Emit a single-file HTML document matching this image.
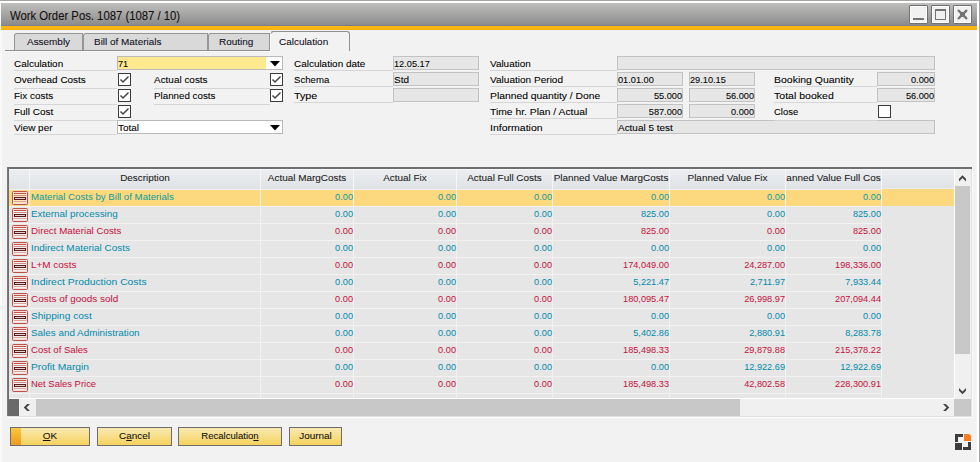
<!DOCTYPE html>
<html><head><meta charset="utf-8"><style>
html,body{margin:0;padding:0}
body{width:980px;height:462px;overflow:hidden;position:relative;background:#f2f2f2;font-family:"Liberation Sans",sans-serif;font-size:9.95px;color:#000}
.a{position:absolute}
.t{position:absolute;white-space:nowrap;line-height:14px;height:14px;-webkit-text-stroke:0.08px currentColor}
</style></head><body>

<div class="a" style="left:0px;top:0px;width:980px;height:1px;background:#a4a4a4"></div>
<div class="a" style="left:0px;top:1px;width:980px;height:2px;background:#ffffff"></div>
<div class="a" style="left:0px;top:3px;width:2px;height:459px;background:#f9f9f9"></div>
<div class="a" style="left:977px;top:1px;width:2px;height:461px;background:#ffffff"></div>
<div class="a" style="left:979px;top:0px;width:1px;height:462px;background:#a4a4a4"></div>
<div class="a" style="left:976px;top:31px;width:1px;height:431px;background:#f8f8f8"></div>
<div class="a" style="left:1px;top:3px;width:976px;height:22px;background:linear-gradient(#bfc0be,#8b8b8b)"></div>
<div class="a" style="left:1px;top:25px;width:976px;height:1px;background:#7b7f89"></div>
<div class="a" style="left:1px;top:26px;width:976px;height:4px;background:linear-gradient(#fdba14,#f8af0c)"></div>
<div class="a" style="left:1px;top:30px;width:976px;height:1px;background:#eef2f7"></div>
<div class="t" style="left:10px;top:9px;font-size:12px;color:#140c0c;transform:scaleX(0.942);transform-origin:0 0">Work Order Pos. 1087 (1087 / 10)</div>
<div class="a" style="left:909px;top:5px;width:19px;height:19px;box-sizing:border-box;border:1px solid #707070;border-radius:1px;background:#f1f1f1;box-shadow:inset 0 0 0 1px #ffffff"></div>
<div class="a" style="left:931px;top:5px;width:19px;height:19px;box-sizing:border-box;border:1px solid #707070;border-radius:1px;background:#f1f1f1;box-shadow:inset 0 0 0 1px #ffffff"></div>
<div class="a" style="left:953px;top:5px;width:19px;height:19px;box-sizing:border-box;border:1px solid #707070;border-radius:1px;background:#f1f1f1;box-shadow:inset 0 0 0 1px #ffffff"></div>
<div class="a" style="left:913px;top:18px;width:11px;height:2px;background:#737373"></div>
<div class="a" style="left:935px;top:9px;width:11px;height:11px;box-sizing:border-box;border:1px solid #737373;border-top-width:2px"></div>
<svg class="a" style="left:953px;top:5px" width="19" height="19" viewBox="0 0 19 19"><path d="M5.6 5.6L13.4 13.4M13.4 5.6L5.6 13.4" stroke="#747474" stroke-width="2.2" stroke-linecap="round"/><rect x="7" y="7" width="5" height="5" fill="#747474"/></svg>
<div class="a" style="left:5px;top:50px;width:266px;height:1px;background:#8e8e8e"></div>
<div class="a" style="left:5px;top:51px;width:266px;height:1px;background:#fafafa"></div>
<div class="a" style="left:14px;top:33px;width:69px;height:17px;box-sizing:border-box;border:1px solid #959595;border-bottom:none;border-top-left-radius:3px;background:#d9d9d9"></div>
<div class="t" style="left:27px;top:35px;color:#0f0f24">Assembly</div>
<div class="a" style="left:83px;top:33px;width:125px;height:17px;box-sizing:border-box;border:1px solid #959595;border-bottom:none;border-top-left-radius:3px;background:#d9d9d9"></div>
<div class="t" style="left:94px;top:35px;color:#0f0f24">Bill of Materials</div>
<div class="a" style="left:208px;top:33px;width:62px;height:17px;box-sizing:border-box;border:1px solid #959595;border-bottom:none;border-top-left-radius:3px;background:#d9d9d9"></div>
<div class="t" style="left:219px;top:35px;color:#0f0f24">Routing</div>
<div class="a" style="left:270px;top:31px;width:80px;height:20px;box-sizing:border-box;border:1px solid #8f8f8f;border-left-color:#fafafa;border-bottom:none;border-top-left-radius:3px;border-top-right-radius:3px;background:#f2f2f2"></div>
<svg class="a" style="left:269px;top:30px" width="5" height="5" viewBox="269 30 5 5"><path d="M270.5 33.8L273 31.5" stroke="#8f8f8f" stroke-width="1"/></svg>
<div class="t" style="left:279px;top:35px;color:#0f0f24">Calculation</div>
<div class="t" style="left:14px;top:57px;color:#000">Calculation</div>
<div class="a" style="left:14px;top:70px;width:103px;height:1px;background:#d6d6d6"></div>
<div class="a" style="left:117px;top:56px;width:166px;height:14px;box-sizing:border-box;border:1px solid #b9b9b9;background:#fff"></div>
<div class="a" style="left:118px;top:57px;width:148px;height:12px;background:#fee98f"></div>
<div class="t" style="left:118px;top:57px;font-size:9.2px;">71</div>
<svg class="a" style="left:270px;top:61px" width="10" height="6" viewBox="0 0 10 6"><path d="M0 0H10L5 5.5Z" fill="#000"/></svg>
<div class="t" style="left:14px;top:73px;color:#000">Overhead Costs</div>
<div class="a" style="left:14px;top:88px;width:103px;height:1px;background:#d6d6d6"></div>
<div class="a" style="left:118px;top:73px;width:13px;height:13px;box-sizing:border-box;border:1px solid #3a3a3a;background:#fff"></div>
<svg class="a" style="left:118px;top:73px" width="13" height="13" viewBox="0 0 13 13"><path d="M2.5 6.5L5 9L10.5 3.5" stroke="#454545" stroke-width="1.5" fill="none"/></svg>
<div class="t" style="left:14px;top:89px;color:#000">Fix costs</div>
<div class="a" style="left:14px;top:104px;width:103px;height:1px;background:#d6d6d6"></div>
<div class="a" style="left:118px;top:89px;width:13px;height:13px;box-sizing:border-box;border:1px solid #3a3a3a;background:#fff"></div>
<svg class="a" style="left:118px;top:89px" width="13" height="13" viewBox="0 0 13 13"><path d="M2.5 6.5L5 9L10.5 3.5" stroke="#454545" stroke-width="1.5" fill="none"/></svg>
<div class="t" style="left:14px;top:105px;color:#000">Full Cost</div>
<div class="a" style="left:14px;top:120px;width:103px;height:1px;background:#d6d6d6"></div>
<div class="a" style="left:118px;top:105px;width:13px;height:13px;box-sizing:border-box;border:1px solid #3a3a3a;background:#fff"></div>
<svg class="a" style="left:118px;top:105px" width="13" height="13" viewBox="0 0 13 13"><path d="M2.5 6.5L5 9L10.5 3.5" stroke="#454545" stroke-width="1.5" fill="none"/></svg>
<div class="t" style="left:14px;top:121px;color:#000">View per</div>
<div class="a" style="left:14px;top:134px;width:103px;height:1px;background:#d6d6d6"></div>
<div class="a" style="left:117px;top:120px;width:166px;height:14px;box-sizing:border-box;border:1px solid #b9b9b9;background:#fff"></div>
<div class="t" style="left:118px;top:121px;">Total</div>
<svg class="a" style="left:270px;top:125px" width="10" height="6" viewBox="0 0 10 6"><path d="M0 0H10L5 5.5Z" fill="#000"/></svg>
<div class="t" style="left:154px;top:73px;color:#000">Actual costs</div>
<div class="a" style="left:154px;top:88px;width:116px;height:1px;background:#d6d6d6"></div>
<div class="a" style="left:270px;top:73px;width:13px;height:13px;box-sizing:border-box;border:1px solid #3a3a3a;background:#fff"></div>
<svg class="a" style="left:270px;top:73px" width="13" height="13" viewBox="0 0 13 13"><path d="M2.5 6.5L5 9L10.5 3.5" stroke="#454545" stroke-width="1.5" fill="none"/></svg>
<div class="t" style="left:154px;top:89px;color:#000;transform:scaleX(0.984);transform-origin:0 0">Planned costs</div>
<div class="a" style="left:154px;top:104px;width:116px;height:1px;background:#d6d6d6"></div>
<div class="a" style="left:270px;top:89px;width:13px;height:13px;box-sizing:border-box;border:1px solid #3a3a3a;background:#fff"></div>
<svg class="a" style="left:270px;top:89px" width="13" height="13" viewBox="0 0 13 13"><path d="M2.5 6.5L5 9L10.5 3.5" stroke="#454545" stroke-width="1.5" fill="none"/></svg>
<div class="t" style="left:294px;top:57px;color:#000">Calculation date</div>
<div class="a" style="left:294px;top:70px;width:99px;height:1px;background:#d6d6d6"></div>
<div class="a" style="left:393px;top:56px;width:86px;height:14px;box-sizing:border-box;border:1px solid #c2c2c2;background:#e6e6e6"></div>
<div class="t" style="left:394px;top:57px;font-size:9.2px;">12.05.17</div>
<div class="t" style="left:294px;top:73px;color:#000;transform:scaleX(0.966);transform-origin:0 0">Schema</div>
<div class="a" style="left:294px;top:86px;width:99px;height:1px;background:#d6d6d6"></div>
<div class="a" style="left:393px;top:72px;width:86px;height:14px;box-sizing:border-box;border:1px solid #c2c2c2;background:#e6e6e6"></div>
<div class="t" style="left:394px;top:73px;">Std</div>
<div class="t" style="left:294px;top:89px;color:#000;transform:scaleX(1.078);transform-origin:0 0">Type</div>
<div class="a" style="left:294px;top:102px;width:99px;height:1px;background:#d6d6d6"></div>
<div class="a" style="left:393px;top:88px;width:86px;height:14px;box-sizing:border-box;border:1px solid #c2c2c2;background:#e6e6e6"></div>
<div class="t" style="left:490px;top:57px;color:#000">Valuation</div>
<div class="a" style="left:490px;top:70px;width:127px;height:1px;background:#d6d6d6"></div>
<div class="a" style="left:617px;top:56px;width:318px;height:14px;box-sizing:border-box;border:1px solid #c2c2c2;background:#e6e6e6"></div>
<div class="t" style="left:490px;top:73px;color:#000;transform:scaleX(1.012);transform-origin:0 0">Valuation Period</div>
<div class="a" style="left:490px;top:86px;width:127px;height:1px;background:#d6d6d6"></div>
<div class="a" style="left:617px;top:72px;width:66px;height:14px;box-sizing:border-box;border:1px solid #c2c2c2;background:#e6e6e6"></div>
<div class="a" style="left:689px;top:72px;width:66px;height:14px;box-sizing:border-box;border:1px solid #c2c2c2;background:#e6e6e6"></div>
<div class="t" style="left:618px;top:73px;font-size:9.2px;">01.01.00</div>
<div class="t" style="left:690px;top:73px;font-size:9.2px;">29.10.15</div>
<div class="t" style="left:490px;top:89px;color:#000;transform:scaleX(1.04);transform-origin:0 0">Planned quantity / Done</div>
<div class="a" style="left:490px;top:102px;width:127px;height:1px;background:#d6d6d6"></div>
<div class="a" style="left:617px;top:88px;width:66px;height:14px;box-sizing:border-box;border:1px solid #c2c2c2;background:#e6e6e6"></div>
<div class="a" style="left:689px;top:88px;width:66px;height:14px;box-sizing:border-box;border:1px solid #c2c2c2;background:#e6e6e6"></div>
<div class="t" style="left:617px;top:89px;width:65px;text-align:right;font-size:9.2px;">55.000</div>
<div class="t" style="left:689px;top:89px;width:65px;text-align:right;font-size:9.2px;">56.000</div>
<div class="t" style="left:490px;top:105px;color:#000;transform:scaleX(1.04);transform-origin:0 0">Time hr. Plan / Actual</div>
<div class="a" style="left:490px;top:118px;width:127px;height:1px;background:#d6d6d6"></div>
<div class="a" style="left:617px;top:104px;width:66px;height:14px;box-sizing:border-box;border:1px solid #c2c2c2;background:#e6e6e6"></div>
<div class="a" style="left:689px;top:104px;width:66px;height:14px;box-sizing:border-box;border:1px solid #c2c2c2;background:#e6e6e6"></div>
<div class="t" style="left:617px;top:105px;width:65px;text-align:right;font-size:9.2px;">587.000</div>
<div class="t" style="left:689px;top:105px;width:65px;text-align:right;font-size:9.2px;">0.000</div>
<div class="t" style="left:490px;top:121px;color:#000;transform:scaleX(1.058);transform-origin:0 0">Information</div>
<div class="a" style="left:490px;top:134px;width:127px;height:1px;background:#d6d6d6"></div>
<div class="a" style="left:617px;top:120px;width:318px;height:14px;box-sizing:border-box;border:1px solid #c2c2c2;background:#e6e6e6"></div>
<div class="t" style="left:618px;top:121px;">Actual 5 test</div>
<div class="a" style="left:775px;top:120px;width:102px;height:1px;background:#d4d4d4"></div>
<div class="t" style="left:774px;top:73px;color:#000;transform:scaleX(1.055);transform-origin:0 0">Booking Quantity</div>
<div class="a" style="left:774px;top:86px;width:103px;height:1px;background:#d6d6d6"></div>
<div class="a" style="left:877px;top:72px;width:58px;height:14px;box-sizing:border-box;border:1px solid #c2c2c2;background:#e6e6e6"></div>
<div class="t" style="left:877px;top:73px;width:57px;text-align:right;font-size:9.2px;">0.000</div>
<div class="t" style="left:774px;top:89px;color:#000;transform:scaleX(1.061);transform-origin:0 0">Total booked</div>
<div class="a" style="left:774px;top:102px;width:103px;height:1px;background:#d6d6d6"></div>
<div class="a" style="left:877px;top:88px;width:58px;height:14px;box-sizing:border-box;border:1px solid #c2c2c2;background:#e6e6e6"></div>
<div class="t" style="left:877px;top:89px;width:57px;text-align:right;font-size:9.2px;">56.000</div>
<div class="t" style="left:774px;top:105px;color:#000;transform:scaleX(0.951);transform-origin:0 0">Close</div>
<div class="a" style="left:878px;top:105px;width:13px;height:13px;box-sizing:border-box;border:1px solid #3a3a3a;background:#fff"></div>
<div class="a" style="left:7px;top:167px;width:965px;height:2px;background:#6f6f6f"></div>
<div class="a" style="left:7px;top:167px;width:2px;height:250px;background:#6f6f6f"></div>
<div class="a" style="left:7px;top:167px;width:1px;height:250px;background:#7a7a7a"></div>
<div class="a" style="left:971px;top:169px;width:1px;height:248px;background:#e2e2e2"></div>
<div class="a" style="left:972px;top:167px;width:1px;height:251px;background:#fbfbfb"></div>
<div class="a" style="left:7px;top:416px;width:965px;height:1px;background:#e2e2e2"></div>
<div class="a" style="left:7px;top:417px;width:966px;height:1px;background:#fbfbfb"></div>
<div class="a" style="left:9px;top:169px;width:945px;height:21px;background:linear-gradient(#eceef1,#dfe2e5)"></div>
<div class="a" style="left:9px;top:169px;width:945px;height:1px;background:#f7f8f9"></div>
<div class="a" style="left:9px;top:189px;width:873px;height:1px;background:#eef0f4"></div>
<div class="a" style="left:882px;top:188px;width:72px;height:1px;background:#e9ecf3"></div>
<div class="a" style="left:882px;top:189px;width:72px;height:1px;background:#fcd97f"></div>
<div class="a" style="left:29px;top:170px;width:1px;height:20px;background:#f6f7f8"></div>
<div class="a" style="left:260px;top:170px;width:1px;height:20px;background:#f6f7f8"></div>
<div class="a" style="left:353px;top:170px;width:1px;height:20px;background:#f6f7f8"></div>
<div class="a" style="left:456px;top:170px;width:1px;height:20px;background:#f6f7f8"></div>
<div class="a" style="left:552px;top:170px;width:1px;height:20px;background:#f6f7f8"></div>
<div class="a" style="left:669px;top:170px;width:1px;height:20px;background:#f6f7f8"></div>
<div class="a" style="left:785px;top:170px;width:1px;height:20px;background:#f6f7f8"></div>
<div class="a" style="left:881px;top:170px;width:1px;height:20px;background:#f6f7f8"></div>
<div class="t" style="left:30px;top:171px;width:230px;text-align:center;color:#1a1a1a;text-align:center;overflow:hidden">Description</div>
<div class="t" style="left:261px;top:171px;width:92px;text-align:center;color:#1a1a1a;text-align:center;overflow:hidden">Actual MargCosts</div>
<div class="t" style="left:354px;top:171px;width:102px;text-align:center;color:#1a1a1a;text-align:center;overflow:hidden">Actual Fix</div>
<div class="t" style="left:457px;top:171px;width:95px;text-align:center;color:#1a1a1a;text-align:center;overflow:hidden">Actual Full Costs</div>
<div class="t" style="left:553px;top:171px;width:116px;text-align:center;color:#1a1a1a;text-align:center;overflow:hidden">Planned Value MargCosts</div>
<div class="t" style="left:670px;top:171px;width:115px;text-align:center;color:#1a1a1a;text-align:center;overflow:hidden">Planned Value Fix</div>
<div class="t" style="left:786px;top:171px;width:95px;text-align:center;color:#1a1a1a;text-align:center;overflow:hidden">anned Value Full Cos</div>
<div class="a" style="left:9px;top:190px;width:945px;height:208px;background:#e6e6e6"></div>
<div class="a" style="left:9px;top:190px;width:945px;height:16px;background:#fcd97f"></div>
<div class="a" style="left:9px;top:206px;width:872px;height:1px;background:#f2f2f2"></div>
<div class="a" style="left:29px;top:190px;width:1px;height:17px;background:#f2f2f2"></div>
<div class="a" style="left:260px;top:190px;width:1px;height:17px;background:#f2f2f2"></div>
<div class="a" style="left:353px;top:190px;width:1px;height:17px;background:#f2f2f2"></div>
<div class="a" style="left:456px;top:190px;width:1px;height:17px;background:#f2f2f2"></div>
<div class="a" style="left:552px;top:190px;width:1px;height:17px;background:#f2f2f2"></div>
<div class="a" style="left:669px;top:190px;width:1px;height:17px;background:#f2f2f2"></div>
<div class="a" style="left:785px;top:190px;width:1px;height:17px;background:#f2f2f2"></div>
<div class="a" style="left:881px;top:190px;width:1px;height:17px;background:#f2f2f2"></div>
<svg class="a" style="left:12px;top:191px" width="16" height="14" viewBox="0 0 16 14"><rect x="0.5" y="0.5" width="15" height="13" rx="1" fill="rgba(255,255,255,0.45)" stroke="#bf5149"/><rect x="1.5" y="1.5" width="13" height="11" fill="none" stroke="#f4dcd8"/><rect x="2" y="2" width="12" height="1" fill="#c0544b"/><rect x="2" y="4" width="12" height="1" fill="#d48a82"/><rect x="2.5" y="6.5" width="11" height="2" fill="#e8d0d0" stroke="#5a1c1c"/><rect x="2" y="10" width="12" height="1" fill="#dca29a"/></svg>
<div class="t" style="left:31px;top:190px;color:#0e9a9e;-webkit-text-stroke:0;transform:scaleX(0.972);transform-origin:0 0">Material Costs by Bill of Materials</div>
<div class="t" style="left:261px;top:190px;width:92px;text-align:right;color:#0e9a9e;-webkit-text-stroke:0;font-size:9.2px;">0.00</div>
<div class="t" style="left:354px;top:190px;width:102px;text-align:right;color:#0e9a9e;-webkit-text-stroke:0;font-size:9.2px;">0.00</div>
<div class="t" style="left:457px;top:190px;width:95px;text-align:right;color:#0e9a9e;-webkit-text-stroke:0;font-size:9.2px;">0.00</div>
<div class="t" style="left:553px;top:190px;width:116px;text-align:right;color:#0e9a9e;-webkit-text-stroke:0;font-size:9.2px;">0.00</div>
<div class="t" style="left:670px;top:190px;width:115px;text-align:right;color:#0e9a9e;-webkit-text-stroke:0;font-size:9.2px;">0.00</div>
<div class="t" style="left:786px;top:190px;width:95px;text-align:right;color:#0e9a9e;-webkit-text-stroke:0;font-size:9.2px;">0.00</div>
<div class="a" style="left:9px;top:207px;width:945px;height:16px;background:#e6e6e6"></div>
<div class="a" style="left:9px;top:223px;width:872px;height:1px;background:#f2f2f2"></div>
<div class="a" style="left:29px;top:207px;width:1px;height:17px;background:#f2f2f2"></div>
<div class="a" style="left:260px;top:207px;width:1px;height:17px;background:#f2f2f2"></div>
<div class="a" style="left:353px;top:207px;width:1px;height:17px;background:#f2f2f2"></div>
<div class="a" style="left:456px;top:207px;width:1px;height:17px;background:#f2f2f2"></div>
<div class="a" style="left:552px;top:207px;width:1px;height:17px;background:#f2f2f2"></div>
<div class="a" style="left:669px;top:207px;width:1px;height:17px;background:#f2f2f2"></div>
<div class="a" style="left:785px;top:207px;width:1px;height:17px;background:#f2f2f2"></div>
<div class="a" style="left:881px;top:207px;width:1px;height:17px;background:#f2f2f2"></div>
<svg class="a" style="left:12px;top:208px" width="16" height="14" viewBox="0 0 16 14"><rect x="0.5" y="0.5" width="15" height="13" rx="1" fill="rgba(255,255,255,0.45)" stroke="#bf5149"/><rect x="1.5" y="1.5" width="13" height="11" fill="none" stroke="#f4dcd8"/><rect x="2" y="2" width="12" height="1" fill="#c0544b"/><rect x="2" y="4" width="12" height="1" fill="#d48a82"/><rect x="2.5" y="6.5" width="11" height="2" fill="#e8d0d0" stroke="#5a1c1c"/><rect x="2" y="10" width="12" height="1" fill="#dca29a"/></svg>
<div class="t" style="left:31px;top:207px;color:#008aab;-webkit-text-stroke:0;transform:scaleX(0.994);transform-origin:0 0">External processing</div>
<div class="t" style="left:261px;top:207px;width:92px;text-align:right;color:#008aab;-webkit-text-stroke:0;font-size:9.2px;">0.00</div>
<div class="t" style="left:354px;top:207px;width:102px;text-align:right;color:#008aab;-webkit-text-stroke:0;font-size:9.2px;">0.00</div>
<div class="t" style="left:457px;top:207px;width:95px;text-align:right;color:#008aab;-webkit-text-stroke:0;font-size:9.2px;">0.00</div>
<div class="t" style="left:553px;top:207px;width:116px;text-align:right;color:#008aab;-webkit-text-stroke:0;font-size:9.2px;">825.00</div>
<div class="t" style="left:670px;top:207px;width:115px;text-align:right;color:#008aab;-webkit-text-stroke:0;font-size:9.2px;">0.00</div>
<div class="t" style="left:786px;top:207px;width:95px;text-align:right;color:#008aab;-webkit-text-stroke:0;font-size:9.2px;">825.00</div>
<div class="a" style="left:9px;top:224px;width:945px;height:16px;background:#e6e6e6"></div>
<div class="a" style="left:9px;top:240px;width:872px;height:1px;background:#f2f2f2"></div>
<div class="a" style="left:29px;top:224px;width:1px;height:17px;background:#f2f2f2"></div>
<div class="a" style="left:260px;top:224px;width:1px;height:17px;background:#f2f2f2"></div>
<div class="a" style="left:353px;top:224px;width:1px;height:17px;background:#f2f2f2"></div>
<div class="a" style="left:456px;top:224px;width:1px;height:17px;background:#f2f2f2"></div>
<div class="a" style="left:552px;top:224px;width:1px;height:17px;background:#f2f2f2"></div>
<div class="a" style="left:669px;top:224px;width:1px;height:17px;background:#f2f2f2"></div>
<div class="a" style="left:785px;top:224px;width:1px;height:17px;background:#f2f2f2"></div>
<div class="a" style="left:881px;top:224px;width:1px;height:17px;background:#f2f2f2"></div>
<svg class="a" style="left:12px;top:225px" width="16" height="14" viewBox="0 0 16 14"><rect x="0.5" y="0.5" width="15" height="13" rx="1" fill="rgba(255,255,255,0.45)" stroke="#bf5149"/><rect x="1.5" y="1.5" width="13" height="11" fill="none" stroke="#f4dcd8"/><rect x="2" y="2" width="12" height="1" fill="#c0544b"/><rect x="2" y="4" width="12" height="1" fill="#d48a82"/><rect x="2.5" y="6.5" width="11" height="2" fill="#e8d0d0" stroke="#5a1c1c"/><rect x="2" y="10" width="12" height="1" fill="#dca29a"/></svg>
<div class="t" style="left:31px;top:224px;color:#c80e3c;-webkit-text-stroke:0;transform:scaleX(0.98);transform-origin:0 0">Direct Material Costs</div>
<div class="t" style="left:261px;top:224px;width:92px;text-align:right;color:#c80e3c;-webkit-text-stroke:0;font-size:9.2px;">0.00</div>
<div class="t" style="left:354px;top:224px;width:102px;text-align:right;color:#c80e3c;-webkit-text-stroke:0;font-size:9.2px;">0.00</div>
<div class="t" style="left:457px;top:224px;width:95px;text-align:right;color:#c80e3c;-webkit-text-stroke:0;font-size:9.2px;">0.00</div>
<div class="t" style="left:553px;top:224px;width:116px;text-align:right;color:#c80e3c;-webkit-text-stroke:0;font-size:9.2px;">825.00</div>
<div class="t" style="left:670px;top:224px;width:115px;text-align:right;color:#c80e3c;-webkit-text-stroke:0;font-size:9.2px;">0.00</div>
<div class="t" style="left:786px;top:224px;width:95px;text-align:right;color:#c80e3c;-webkit-text-stroke:0;font-size:9.2px;">825.00</div>
<div class="a" style="left:9px;top:241px;width:945px;height:16px;background:#e6e6e6"></div>
<div class="a" style="left:9px;top:257px;width:872px;height:1px;background:#f2f2f2"></div>
<div class="a" style="left:29px;top:241px;width:1px;height:17px;background:#f2f2f2"></div>
<div class="a" style="left:260px;top:241px;width:1px;height:17px;background:#f2f2f2"></div>
<div class="a" style="left:353px;top:241px;width:1px;height:17px;background:#f2f2f2"></div>
<div class="a" style="left:456px;top:241px;width:1px;height:17px;background:#f2f2f2"></div>
<div class="a" style="left:552px;top:241px;width:1px;height:17px;background:#f2f2f2"></div>
<div class="a" style="left:669px;top:241px;width:1px;height:17px;background:#f2f2f2"></div>
<div class="a" style="left:785px;top:241px;width:1px;height:17px;background:#f2f2f2"></div>
<div class="a" style="left:881px;top:241px;width:1px;height:17px;background:#f2f2f2"></div>
<svg class="a" style="left:12px;top:242px" width="16" height="14" viewBox="0 0 16 14"><rect x="0.5" y="0.5" width="15" height="13" rx="1" fill="rgba(255,255,255,0.45)" stroke="#bf5149"/><rect x="1.5" y="1.5" width="13" height="11" fill="none" stroke="#f4dcd8"/><rect x="2" y="2" width="12" height="1" fill="#c0544b"/><rect x="2" y="4" width="12" height="1" fill="#d48a82"/><rect x="2.5" y="6.5" width="11" height="2" fill="#e8d0d0" stroke="#5a1c1c"/><rect x="2" y="10" width="12" height="1" fill="#dca29a"/></svg>
<div class="t" style="left:31px;top:241px;color:#008aab;-webkit-text-stroke:0;transform:scaleX(1.0);transform-origin:0 0">Indirect Material Costs</div>
<div class="t" style="left:261px;top:241px;width:92px;text-align:right;color:#008aab;-webkit-text-stroke:0;font-size:9.2px;">0.00</div>
<div class="t" style="left:354px;top:241px;width:102px;text-align:right;color:#008aab;-webkit-text-stroke:0;font-size:9.2px;">0.00</div>
<div class="t" style="left:457px;top:241px;width:95px;text-align:right;color:#008aab;-webkit-text-stroke:0;font-size:9.2px;">0.00</div>
<div class="t" style="left:553px;top:241px;width:116px;text-align:right;color:#008aab;-webkit-text-stroke:0;font-size:9.2px;">0.00</div>
<div class="t" style="left:670px;top:241px;width:115px;text-align:right;color:#008aab;-webkit-text-stroke:0;font-size:9.2px;">0.00</div>
<div class="t" style="left:786px;top:241px;width:95px;text-align:right;color:#008aab;-webkit-text-stroke:0;font-size:9.2px;">0.00</div>
<div class="a" style="left:9px;top:258px;width:945px;height:16px;background:#e6e6e6"></div>
<div class="a" style="left:9px;top:274px;width:872px;height:1px;background:#f2f2f2"></div>
<div class="a" style="left:29px;top:258px;width:1px;height:17px;background:#f2f2f2"></div>
<div class="a" style="left:260px;top:258px;width:1px;height:17px;background:#f2f2f2"></div>
<div class="a" style="left:353px;top:258px;width:1px;height:17px;background:#f2f2f2"></div>
<div class="a" style="left:456px;top:258px;width:1px;height:17px;background:#f2f2f2"></div>
<div class="a" style="left:552px;top:258px;width:1px;height:17px;background:#f2f2f2"></div>
<div class="a" style="left:669px;top:258px;width:1px;height:17px;background:#f2f2f2"></div>
<div class="a" style="left:785px;top:258px;width:1px;height:17px;background:#f2f2f2"></div>
<div class="a" style="left:881px;top:258px;width:1px;height:17px;background:#f2f2f2"></div>
<svg class="a" style="left:12px;top:259px" width="16" height="14" viewBox="0 0 16 14"><rect x="0.5" y="0.5" width="15" height="13" rx="1" fill="rgba(255,255,255,0.45)" stroke="#bf5149"/><rect x="1.5" y="1.5" width="13" height="11" fill="none" stroke="#f4dcd8"/><rect x="2" y="2" width="12" height="1" fill="#c0544b"/><rect x="2" y="4" width="12" height="1" fill="#d48a82"/><rect x="2.5" y="6.5" width="11" height="2" fill="#e8d0d0" stroke="#5a1c1c"/><rect x="2" y="10" width="12" height="1" fill="#dca29a"/></svg>
<div class="t" style="left:31px;top:258px;color:#c80e3c;-webkit-text-stroke:0;transform:scaleX(1.0);transform-origin:0 0">L+M costs</div>
<div class="t" style="left:261px;top:258px;width:92px;text-align:right;color:#c80e3c;-webkit-text-stroke:0;font-size:9.2px;">0.00</div>
<div class="t" style="left:354px;top:258px;width:102px;text-align:right;color:#c80e3c;-webkit-text-stroke:0;font-size:9.2px;">0.00</div>
<div class="t" style="left:457px;top:258px;width:95px;text-align:right;color:#c80e3c;-webkit-text-stroke:0;font-size:9.2px;">0.00</div>
<div class="t" style="left:553px;top:258px;width:116px;text-align:right;color:#c80e3c;-webkit-text-stroke:0;font-size:9.2px;">174,049.00</div>
<div class="t" style="left:670px;top:258px;width:115px;text-align:right;color:#c80e3c;-webkit-text-stroke:0;font-size:9.2px;">24,287.00</div>
<div class="t" style="left:786px;top:258px;width:95px;text-align:right;color:#c80e3c;-webkit-text-stroke:0;font-size:9.2px;">198,336.00</div>
<div class="a" style="left:9px;top:275px;width:945px;height:16px;background:#e6e6e6"></div>
<div class="a" style="left:9px;top:291px;width:872px;height:1px;background:#f2f2f2"></div>
<div class="a" style="left:29px;top:275px;width:1px;height:17px;background:#f2f2f2"></div>
<div class="a" style="left:260px;top:275px;width:1px;height:17px;background:#f2f2f2"></div>
<div class="a" style="left:353px;top:275px;width:1px;height:17px;background:#f2f2f2"></div>
<div class="a" style="left:456px;top:275px;width:1px;height:17px;background:#f2f2f2"></div>
<div class="a" style="left:552px;top:275px;width:1px;height:17px;background:#f2f2f2"></div>
<div class="a" style="left:669px;top:275px;width:1px;height:17px;background:#f2f2f2"></div>
<div class="a" style="left:785px;top:275px;width:1px;height:17px;background:#f2f2f2"></div>
<div class="a" style="left:881px;top:275px;width:1px;height:17px;background:#f2f2f2"></div>
<svg class="a" style="left:12px;top:276px" width="16" height="14" viewBox="0 0 16 14"><rect x="0.5" y="0.5" width="15" height="13" rx="1" fill="rgba(255,255,255,0.45)" stroke="#bf5149"/><rect x="1.5" y="1.5" width="13" height="11" fill="none" stroke="#f4dcd8"/><rect x="2" y="2" width="12" height="1" fill="#c0544b"/><rect x="2" y="4" width="12" height="1" fill="#d48a82"/><rect x="2.5" y="6.5" width="11" height="2" fill="#e8d0d0" stroke="#5a1c1c"/><rect x="2" y="10" width="12" height="1" fill="#dca29a"/></svg>
<div class="t" style="left:31px;top:275px;color:#008aab;-webkit-text-stroke:0;transform:scaleX(1.041);transform-origin:0 0">Indirect Production Costs</div>
<div class="t" style="left:261px;top:275px;width:92px;text-align:right;color:#008aab;-webkit-text-stroke:0;font-size:9.2px;">0.00</div>
<div class="t" style="left:354px;top:275px;width:102px;text-align:right;color:#008aab;-webkit-text-stroke:0;font-size:9.2px;">0.00</div>
<div class="t" style="left:457px;top:275px;width:95px;text-align:right;color:#008aab;-webkit-text-stroke:0;font-size:9.2px;">0.00</div>
<div class="t" style="left:553px;top:275px;width:116px;text-align:right;color:#008aab;-webkit-text-stroke:0;font-size:9.2px;">5,221.47</div>
<div class="t" style="left:670px;top:275px;width:115px;text-align:right;color:#008aab;-webkit-text-stroke:0;font-size:9.2px;">2,711.97</div>
<div class="t" style="left:786px;top:275px;width:95px;text-align:right;color:#008aab;-webkit-text-stroke:0;font-size:9.2px;">7,933.44</div>
<div class="a" style="left:9px;top:292px;width:945px;height:16px;background:#e6e6e6"></div>
<div class="a" style="left:9px;top:308px;width:872px;height:1px;background:#f2f2f2"></div>
<div class="a" style="left:29px;top:292px;width:1px;height:17px;background:#f2f2f2"></div>
<div class="a" style="left:260px;top:292px;width:1px;height:17px;background:#f2f2f2"></div>
<div class="a" style="left:353px;top:292px;width:1px;height:17px;background:#f2f2f2"></div>
<div class="a" style="left:456px;top:292px;width:1px;height:17px;background:#f2f2f2"></div>
<div class="a" style="left:552px;top:292px;width:1px;height:17px;background:#f2f2f2"></div>
<div class="a" style="left:669px;top:292px;width:1px;height:17px;background:#f2f2f2"></div>
<div class="a" style="left:785px;top:292px;width:1px;height:17px;background:#f2f2f2"></div>
<div class="a" style="left:881px;top:292px;width:1px;height:17px;background:#f2f2f2"></div>
<svg class="a" style="left:12px;top:293px" width="16" height="14" viewBox="0 0 16 14"><rect x="0.5" y="0.5" width="15" height="13" rx="1" fill="rgba(255,255,255,0.45)" stroke="#bf5149"/><rect x="1.5" y="1.5" width="13" height="11" fill="none" stroke="#f4dcd8"/><rect x="2" y="2" width="12" height="1" fill="#c0544b"/><rect x="2" y="4" width="12" height="1" fill="#d48a82"/><rect x="2.5" y="6.5" width="11" height="2" fill="#e8d0d0" stroke="#5a1c1c"/><rect x="2" y="10" width="12" height="1" fill="#dca29a"/></svg>
<div class="t" style="left:31px;top:292px;color:#c80e3c;-webkit-text-stroke:0;transform:scaleX(1.0);transform-origin:0 0">Costs of goods sold</div>
<div class="t" style="left:261px;top:292px;width:92px;text-align:right;color:#c80e3c;-webkit-text-stroke:0;font-size:9.2px;">0.00</div>
<div class="t" style="left:354px;top:292px;width:102px;text-align:right;color:#c80e3c;-webkit-text-stroke:0;font-size:9.2px;">0.00</div>
<div class="t" style="left:457px;top:292px;width:95px;text-align:right;color:#c80e3c;-webkit-text-stroke:0;font-size:9.2px;">0.00</div>
<div class="t" style="left:553px;top:292px;width:116px;text-align:right;color:#c80e3c;-webkit-text-stroke:0;font-size:9.2px;">180,095.47</div>
<div class="t" style="left:670px;top:292px;width:115px;text-align:right;color:#c80e3c;-webkit-text-stroke:0;font-size:9.2px;">26,998.97</div>
<div class="t" style="left:786px;top:292px;width:95px;text-align:right;color:#c80e3c;-webkit-text-stroke:0;font-size:9.2px;">207,094.44</div>
<div class="a" style="left:9px;top:309px;width:945px;height:16px;background:#e6e6e6"></div>
<div class="a" style="left:9px;top:325px;width:872px;height:1px;background:#f2f2f2"></div>
<div class="a" style="left:29px;top:309px;width:1px;height:17px;background:#f2f2f2"></div>
<div class="a" style="left:260px;top:309px;width:1px;height:17px;background:#f2f2f2"></div>
<div class="a" style="left:353px;top:309px;width:1px;height:17px;background:#f2f2f2"></div>
<div class="a" style="left:456px;top:309px;width:1px;height:17px;background:#f2f2f2"></div>
<div class="a" style="left:552px;top:309px;width:1px;height:17px;background:#f2f2f2"></div>
<div class="a" style="left:669px;top:309px;width:1px;height:17px;background:#f2f2f2"></div>
<div class="a" style="left:785px;top:309px;width:1px;height:17px;background:#f2f2f2"></div>
<div class="a" style="left:881px;top:309px;width:1px;height:17px;background:#f2f2f2"></div>
<svg class="a" style="left:12px;top:310px" width="16" height="14" viewBox="0 0 16 14"><rect x="0.5" y="0.5" width="15" height="13" rx="1" fill="rgba(255,255,255,0.45)" stroke="#bf5149"/><rect x="1.5" y="1.5" width="13" height="11" fill="none" stroke="#f4dcd8"/><rect x="2" y="2" width="12" height="1" fill="#c0544b"/><rect x="2" y="4" width="12" height="1" fill="#d48a82"/><rect x="2.5" y="6.5" width="11" height="2" fill="#e8d0d0" stroke="#5a1c1c"/><rect x="2" y="10" width="12" height="1" fill="#dca29a"/></svg>
<div class="t" style="left:31px;top:309px;color:#008aab;-webkit-text-stroke:0;transform:scaleX(1.018);transform-origin:0 0">Shipping cost</div>
<div class="t" style="left:261px;top:309px;width:92px;text-align:right;color:#008aab;-webkit-text-stroke:0;font-size:9.2px;">0.00</div>
<div class="t" style="left:354px;top:309px;width:102px;text-align:right;color:#008aab;-webkit-text-stroke:0;font-size:9.2px;">0.00</div>
<div class="t" style="left:457px;top:309px;width:95px;text-align:right;color:#008aab;-webkit-text-stroke:0;font-size:9.2px;">0.00</div>
<div class="t" style="left:553px;top:309px;width:116px;text-align:right;color:#008aab;-webkit-text-stroke:0;font-size:9.2px;">0.00</div>
<div class="t" style="left:670px;top:309px;width:115px;text-align:right;color:#008aab;-webkit-text-stroke:0;font-size:9.2px;">0.00</div>
<div class="t" style="left:786px;top:309px;width:95px;text-align:right;color:#008aab;-webkit-text-stroke:0;font-size:9.2px;">0.00</div>
<div class="a" style="left:9px;top:326px;width:945px;height:16px;background:#e6e6e6"></div>
<div class="a" style="left:9px;top:342px;width:872px;height:1px;background:#f2f2f2"></div>
<div class="a" style="left:29px;top:326px;width:1px;height:17px;background:#f2f2f2"></div>
<div class="a" style="left:260px;top:326px;width:1px;height:17px;background:#f2f2f2"></div>
<div class="a" style="left:353px;top:326px;width:1px;height:17px;background:#f2f2f2"></div>
<div class="a" style="left:456px;top:326px;width:1px;height:17px;background:#f2f2f2"></div>
<div class="a" style="left:552px;top:326px;width:1px;height:17px;background:#f2f2f2"></div>
<div class="a" style="left:669px;top:326px;width:1px;height:17px;background:#f2f2f2"></div>
<div class="a" style="left:785px;top:326px;width:1px;height:17px;background:#f2f2f2"></div>
<div class="a" style="left:881px;top:326px;width:1px;height:17px;background:#f2f2f2"></div>
<svg class="a" style="left:12px;top:327px" width="16" height="14" viewBox="0 0 16 14"><rect x="0.5" y="0.5" width="15" height="13" rx="1" fill="rgba(255,255,255,0.45)" stroke="#bf5149"/><rect x="1.5" y="1.5" width="13" height="11" fill="none" stroke="#f4dcd8"/><rect x="2" y="2" width="12" height="1" fill="#c0544b"/><rect x="2" y="4" width="12" height="1" fill="#d48a82"/><rect x="2.5" y="6.5" width="11" height="2" fill="#e8d0d0" stroke="#5a1c1c"/><rect x="2" y="10" width="12" height="1" fill="#dca29a"/></svg>
<div class="t" style="left:31px;top:326px;color:#008aab;-webkit-text-stroke:0;transform:scaleX(0.993);transform-origin:0 0">Sales and Administration</div>
<div class="t" style="left:261px;top:326px;width:92px;text-align:right;color:#008aab;-webkit-text-stroke:0;font-size:9.2px;">0.00</div>
<div class="t" style="left:354px;top:326px;width:102px;text-align:right;color:#008aab;-webkit-text-stroke:0;font-size:9.2px;">0.00</div>
<div class="t" style="left:457px;top:326px;width:95px;text-align:right;color:#008aab;-webkit-text-stroke:0;font-size:9.2px;">0.00</div>
<div class="t" style="left:553px;top:326px;width:116px;text-align:right;color:#008aab;-webkit-text-stroke:0;font-size:9.2px;">5,402.86</div>
<div class="t" style="left:670px;top:326px;width:115px;text-align:right;color:#008aab;-webkit-text-stroke:0;font-size:9.2px;">2,880.91</div>
<div class="t" style="left:786px;top:326px;width:95px;text-align:right;color:#008aab;-webkit-text-stroke:0;font-size:9.2px;">8,283.78</div>
<div class="a" style="left:9px;top:343px;width:945px;height:16px;background:#e6e6e6"></div>
<div class="a" style="left:9px;top:359px;width:872px;height:1px;background:#f2f2f2"></div>
<div class="a" style="left:29px;top:343px;width:1px;height:17px;background:#f2f2f2"></div>
<div class="a" style="left:260px;top:343px;width:1px;height:17px;background:#f2f2f2"></div>
<div class="a" style="left:353px;top:343px;width:1px;height:17px;background:#f2f2f2"></div>
<div class="a" style="left:456px;top:343px;width:1px;height:17px;background:#f2f2f2"></div>
<div class="a" style="left:552px;top:343px;width:1px;height:17px;background:#f2f2f2"></div>
<div class="a" style="left:669px;top:343px;width:1px;height:17px;background:#f2f2f2"></div>
<div class="a" style="left:785px;top:343px;width:1px;height:17px;background:#f2f2f2"></div>
<div class="a" style="left:881px;top:343px;width:1px;height:17px;background:#f2f2f2"></div>
<svg class="a" style="left:12px;top:344px" width="16" height="14" viewBox="0 0 16 14"><rect x="0.5" y="0.5" width="15" height="13" rx="1" fill="rgba(255,255,255,0.45)" stroke="#bf5149"/><rect x="1.5" y="1.5" width="13" height="11" fill="none" stroke="#f4dcd8"/><rect x="2" y="2" width="12" height="1" fill="#c0544b"/><rect x="2" y="4" width="12" height="1" fill="#d48a82"/><rect x="2.5" y="6.5" width="11" height="2" fill="#e8d0d0" stroke="#5a1c1c"/><rect x="2" y="10" width="12" height="1" fill="#dca29a"/></svg>
<div class="t" style="left:31px;top:343px;color:#c80e3c;-webkit-text-stroke:0;transform:scaleX(0.962);transform-origin:0 0">Cost of Sales</div>
<div class="t" style="left:261px;top:343px;width:92px;text-align:right;color:#c80e3c;-webkit-text-stroke:0;font-size:9.2px;">0.00</div>
<div class="t" style="left:354px;top:343px;width:102px;text-align:right;color:#c80e3c;-webkit-text-stroke:0;font-size:9.2px;">0.00</div>
<div class="t" style="left:457px;top:343px;width:95px;text-align:right;color:#c80e3c;-webkit-text-stroke:0;font-size:9.2px;">0.00</div>
<div class="t" style="left:553px;top:343px;width:116px;text-align:right;color:#c80e3c;-webkit-text-stroke:0;font-size:9.2px;">185,498.33</div>
<div class="t" style="left:670px;top:343px;width:115px;text-align:right;color:#c80e3c;-webkit-text-stroke:0;font-size:9.2px;">29,879.88</div>
<div class="t" style="left:786px;top:343px;width:95px;text-align:right;color:#c80e3c;-webkit-text-stroke:0;font-size:9.2px;">215,378.22</div>
<div class="a" style="left:9px;top:360px;width:945px;height:16px;background:#e6e6e6"></div>
<div class="a" style="left:9px;top:376px;width:872px;height:1px;background:#f2f2f2"></div>
<div class="a" style="left:29px;top:360px;width:1px;height:17px;background:#f2f2f2"></div>
<div class="a" style="left:260px;top:360px;width:1px;height:17px;background:#f2f2f2"></div>
<div class="a" style="left:353px;top:360px;width:1px;height:17px;background:#f2f2f2"></div>
<div class="a" style="left:456px;top:360px;width:1px;height:17px;background:#f2f2f2"></div>
<div class="a" style="left:552px;top:360px;width:1px;height:17px;background:#f2f2f2"></div>
<div class="a" style="left:669px;top:360px;width:1px;height:17px;background:#f2f2f2"></div>
<div class="a" style="left:785px;top:360px;width:1px;height:17px;background:#f2f2f2"></div>
<div class="a" style="left:881px;top:360px;width:1px;height:17px;background:#f2f2f2"></div>
<svg class="a" style="left:12px;top:361px" width="16" height="14" viewBox="0 0 16 14"><rect x="0.5" y="0.5" width="15" height="13" rx="1" fill="rgba(255,255,255,0.45)" stroke="#bf5149"/><rect x="1.5" y="1.5" width="13" height="11" fill="none" stroke="#f4dcd8"/><rect x="2" y="2" width="12" height="1" fill="#c0544b"/><rect x="2" y="4" width="12" height="1" fill="#d48a82"/><rect x="2.5" y="6.5" width="11" height="2" fill="#e8d0d0" stroke="#5a1c1c"/><rect x="2" y="10" width="12" height="1" fill="#dca29a"/></svg>
<div class="t" style="left:31px;top:360px;color:#008aab;-webkit-text-stroke:0;transform:scaleX(1.029);transform-origin:0 0">Profit Margin</div>
<div class="t" style="left:261px;top:360px;width:92px;text-align:right;color:#008aab;-webkit-text-stroke:0;font-size:9.2px;">0.00</div>
<div class="t" style="left:354px;top:360px;width:102px;text-align:right;color:#008aab;-webkit-text-stroke:0;font-size:9.2px;">0.00</div>
<div class="t" style="left:457px;top:360px;width:95px;text-align:right;color:#008aab;-webkit-text-stroke:0;font-size:9.2px;">0.00</div>
<div class="t" style="left:553px;top:360px;width:116px;text-align:right;color:#008aab;-webkit-text-stroke:0;font-size:9.2px;">0.00</div>
<div class="t" style="left:670px;top:360px;width:115px;text-align:right;color:#008aab;-webkit-text-stroke:0;font-size:9.2px;">12,922.69</div>
<div class="t" style="left:786px;top:360px;width:95px;text-align:right;color:#008aab;-webkit-text-stroke:0;font-size:9.2px;">12,922.69</div>
<div class="a" style="left:9px;top:377px;width:945px;height:16px;background:#e6e6e6"></div>
<div class="a" style="left:9px;top:393px;width:872px;height:1px;background:#f2f2f2"></div>
<div class="a" style="left:29px;top:377px;width:1px;height:17px;background:#f2f2f2"></div>
<div class="a" style="left:260px;top:377px;width:1px;height:17px;background:#f2f2f2"></div>
<div class="a" style="left:353px;top:377px;width:1px;height:17px;background:#f2f2f2"></div>
<div class="a" style="left:456px;top:377px;width:1px;height:17px;background:#f2f2f2"></div>
<div class="a" style="left:552px;top:377px;width:1px;height:17px;background:#f2f2f2"></div>
<div class="a" style="left:669px;top:377px;width:1px;height:17px;background:#f2f2f2"></div>
<div class="a" style="left:785px;top:377px;width:1px;height:17px;background:#f2f2f2"></div>
<div class="a" style="left:881px;top:377px;width:1px;height:17px;background:#f2f2f2"></div>
<svg class="a" style="left:12px;top:378px" width="16" height="14" viewBox="0 0 16 14"><rect x="0.5" y="0.5" width="15" height="13" rx="1" fill="rgba(255,255,255,0.45)" stroke="#bf5149"/><rect x="1.5" y="1.5" width="13" height="11" fill="none" stroke="#f4dcd8"/><rect x="2" y="2" width="12" height="1" fill="#c0544b"/><rect x="2" y="4" width="12" height="1" fill="#d48a82"/><rect x="2.5" y="6.5" width="11" height="2" fill="#e8d0d0" stroke="#5a1c1c"/><rect x="2" y="10" width="12" height="1" fill="#dca29a"/></svg>
<div class="t" style="left:31px;top:377px;color:#c80e3c;-webkit-text-stroke:0;transform:scaleX(0.951);transform-origin:0 0">Net Sales Price</div>
<div class="t" style="left:261px;top:377px;width:92px;text-align:right;color:#c80e3c;-webkit-text-stroke:0;font-size:9.2px;">0.00</div>
<div class="t" style="left:354px;top:377px;width:102px;text-align:right;color:#c80e3c;-webkit-text-stroke:0;font-size:9.2px;">0.00</div>
<div class="t" style="left:457px;top:377px;width:95px;text-align:right;color:#c80e3c;-webkit-text-stroke:0;font-size:9.2px;">0.00</div>
<div class="t" style="left:553px;top:377px;width:116px;text-align:right;color:#c80e3c;-webkit-text-stroke:0;font-size:9.2px;">185,498.33</div>
<div class="t" style="left:670px;top:377px;width:115px;text-align:right;color:#c80e3c;-webkit-text-stroke:0;font-size:9.2px;">42,802.58</div>
<div class="t" style="left:786px;top:377px;width:95px;text-align:right;color:#c80e3c;-webkit-text-stroke:0;font-size:9.2px;">228,300.91</div>
<div class="a" style="left:29px;top:394px;width:1px;height:4px;background:#f2f2f2"></div>
<div class="a" style="left:260px;top:394px;width:1px;height:4px;background:#f2f2f2"></div>
<div class="a" style="left:353px;top:394px;width:1px;height:4px;background:#f2f2f2"></div>
<div class="a" style="left:456px;top:394px;width:1px;height:4px;background:#f2f2f2"></div>
<div class="a" style="left:552px;top:394px;width:1px;height:4px;background:#f2f2f2"></div>
<div class="a" style="left:669px;top:394px;width:1px;height:4px;background:#f2f2f2"></div>
<div class="a" style="left:785px;top:394px;width:1px;height:4px;background:#f2f2f2"></div>
<div class="a" style="left:881px;top:394px;width:1px;height:4px;background:#f2f2f2"></div>
<div class="a" style="left:954px;top:169px;width:1px;height:230px;background:#ffffff"></div>
<div class="a" style="left:955px;top:169px;width:16px;height:230px;background:#f0f0f0"></div>
<div class="a" style="left:955px;top:186px;width:15px;height:168px;background:#c8c8c8"></div>
<svg class="a" style="left:955px;top:170px" width="16" height="16" viewBox="955 170 16 16"><polygon points="959,178.7 962.5,175.2 966,178.7 966,181.5 962.5,178 959,181.5" fill="#454545"/></svg>
<svg class="a" style="left:955px;top:382px" width="16" height="16" viewBox="955 382 16 16"><polygon points="959,388 962.5,391.5 966,388 966,390.8 962.5,394.3 959,390.8" fill="#454545"/></svg>
<div class="a" style="left:9px;top:398px;width:946px;height:1px;background:#ffffff"></div>
<div class="a" style="left:8px;top:399px;width:11px;height:17px;background:#6a6a6a"></div>
<div class="a" style="left:19px;top:399px;width:935px;height:17px;background:#f0f0f0"></div>
<div class="a" style="left:36px;top:399px;width:704px;height:17px;background:#c8c8c8"></div>
<div class="a" style="left:954px;top:399px;width:17px;height:17px;background:#c8c8c8"></div>
<svg class="a" style="left:19px;top:399px" width="16" height="16" viewBox="19 399 16 16"><polygon points="30,404 27.2,404 23.7,407.5 27.2,411 30,411 26.5,407.5" fill="#454545"/></svg>
<svg class="a" style="left:938px;top:399px" width="16" height="16" viewBox="938 399 16 16"><polygon points="943,404 945.8,404 949.3,407.5 945.8,411 943,411 946.5,407.5" fill="#454545"/></svg>
<div class="a" style="left:10px;top:427px;width:80px;height:19px;box-sizing:border-box;border:1px solid #6e6e6e;background:linear-gradient(#fae9b2,#f4d25c)"></div>
<div class="a" style="left:11px;top:428px;width:10px;height:17px;background:linear-gradient(#f9c93c,#f09a1e)"></div>
<div class="t" style="left:10px;top:429px;width:80px;text-align:center;color:#111;transform:scaleX(1.0)"><u>O</u>K</div>
<div class="a" style="left:97px;top:427px;width:75px;height:19px;box-sizing:border-box;border:1px solid #6e6e6e;background:linear-gradient(#fae9b2,#f4d25c)"></div>
<div class="t" style="left:97px;top:429px;width:75px;text-align:center;color:#111;transform:scaleX(1.0)">C<u>a</u>ncel</div>
<div class="a" style="left:178px;top:427px;width:104px;height:19px;box-sizing:border-box;border:1px solid #6e6e6e;background:linear-gradient(#fae9b2,#f4d25c)"></div>
<div class="t" style="left:178px;top:429px;width:104px;text-align:center;color:#111;transform:scaleX(0.96)">Recalculatio<u>n</u></div>
<div class="a" style="left:289px;top:427px;width:53px;height:19px;box-sizing:border-box;border:1px solid #6e6e6e;background:linear-gradient(#fae9b2,#f4d25c)"></div>
<div class="t" style="left:289px;top:429px;width:53px;text-align:center;color:#111;transform:scaleX(1.0)">Journal</div>
<svg class="a" style="left:955px;top:434px" width="16" height="16" viewBox="0 0 16 16"><path d="M0 0H8V3H3V8H0Z" fill="#3d3d3d"/><path d="M9 0H13A3 3 0 0 1 16 3V7H9Z" fill="#f97c1f"/><rect x="0" y="9" width="7" height="7" fill="#3d3d3d"/><path d="M13 8H16V16H8V13H13Z" fill="#3d3d3d"/></svg>
</body></html>
